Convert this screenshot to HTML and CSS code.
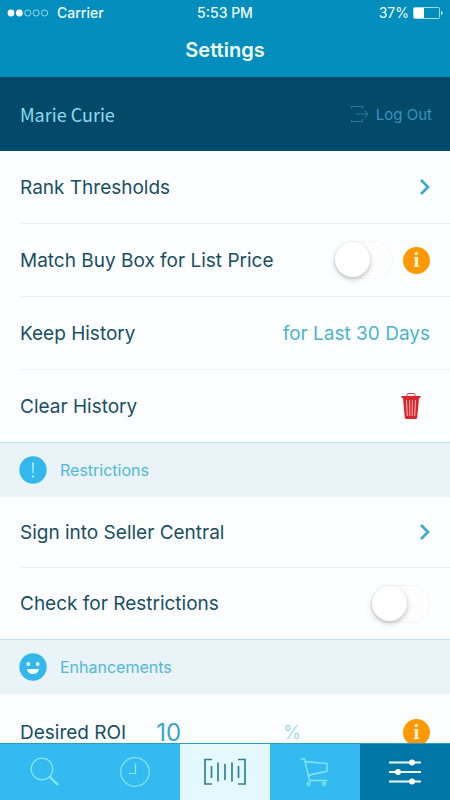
FILE: index.html
```html
<!DOCTYPE html>
<html lang="en">
<head>
<meta charset="utf-8">
<meta name="viewport" content="width=device-width, initial-scale=1">
<title>Settings</title>
<link rel="stylesheet" href="styles.css">
</head>
<body>
<header class="top">
  <div class="status">
    <div class="carrier">
      <svg class="signal" viewBox="0 0 42 8" aria-hidden="true">
        <g fill="#fff"><circle cx="4" cy="4" r="3.4"/><circle cx="12.4" cy="4" r="3.4"/></g>
        <g fill="none" stroke="#b9eafa" stroke-width=".8"><circle cx="20.8" cy="4" r="3.1"/><circle cx="29.2" cy="4" r="3.1"/><circle cx="37.6" cy="4" r="3.1"/></g>
      </svg>
      <span>Carrier</span>
    </div>
    <time>5:53 PM</time>
    <div class="battery">
      <span>37%</span>
      <svg viewBox="0 0 30 12" aria-hidden="true">
        <rect x=".5" y=".5" width="26" height="11" rx="1" fill="none" stroke="#9fdcf2"/>
        <rect x="1" y="1" width="10" height="10" fill="#fff"/>
        <path d="M28 4v4c1-.3 1.5-1 1.500-2s-.5-1.700-1.500-2z" fill="#d5f2fb"/>
      </svg>
    </div>
  </div>
  <h1>Settings</h1>
</header>

<section class="user">
  <span class="user-name">Marie Curie</span>
  <button class="logout" type="button">
    <svg viewBox="0 0 18 16" aria-hidden="true"><path d="M.5 2.500V.5H11.500V3M.5 13.500v2H11.500V13M5 8h12M13.500 4.500 17 8l-3.500 3.500" fill="none" stroke="currentColor"/></svg>
    Log Out
  </button>
</section>

<main class="settings">
  <a class="row" href="#rank">
    <span>Rank Thresholds</span>
    <svg class="chevron" viewBox="0 0 10 18" aria-hidden="true"><path d="M1 2l7 7-7 7"/></svg>
  </a>
  <div class="row">
    <label for="buybox">Match Buy Box for List Price</label>
    <span class="controls">
      <input class="switch" id="buybox" type="checkbox">
      <button class="info" type="button" aria-label="About matching the buy box">i</button>
    </span>
  </div>
  <div class="row">
    <label for="history">Keep History</label>
    <select class="choice" id="history"><option>for Last 30 Days</option></select>
  </div>
  <div class="row">
    <span>Clear History</span>
    <button class="trash" type="button" aria-label="Clear history">
      <svg viewBox="0 0 20 26" aria-hidden="true">
        <path d="M6 3.500V1.500Q6 .5 7 .5h6q1 0 1 1v2" fill="none" stroke="#dd3a3e"/>
        <path d="M.5 3h19v2H.5zM2 5h16l-1.800 19.500Q16 26 14.500 26h-9Q4 26 3.800 24.500z" fill="#dd242b"/>
        <path d="M5.500 7l.8 16M8.600 7l.2 16M11.400 7l-.2 16M14.500 7l-.8 16" stroke="#ffc9c9" stroke-width=".9" fill="none"/>
      </svg>
    </button>
  </div>

  <h2 class="section">
    <svg viewBox="0 0 28 28" aria-hidden="true"><circle cx="14" cy="14" r="13.700" fill="#33b7ec"/><path d="M13.200 6.500h1.600l-.4 11h-.8z" fill="#d5f8ff"/><circle cx="14" cy="20.500" r="1" fill="#d5f8ff"/></svg>
    Restrictions
  </h2>
  <a class="row compact" href="#seller">
    <span>Sign into Seller Central</span>
    <svg class="chevron" viewBox="0 0 10 18" aria-hidden="true"><path d="M1 2l7 7-7 7"/></svg>
  </a>
  <div class="row compact">
    <label for="restrictions">Check for Restrictions</label>
    <input class="switch" id="restrictions" type="checkbox">
  </div>

  <h2 class="section">
    <svg viewBox="0 0 28 28" aria-hidden="true"><circle cx="14" cy="14" r="13.700" fill="#33b7ec"/><g fill="#f2fdff"><circle cx="9.300" cy="11" r="1.900"/><circle cx="18.700" cy="11" r="1.900"/><path d="M8 16h12q-.8 5-6 5t-6-5z"/></g></svg>
    Enhancements
  </h2>
  <div class="row last">
    <label for="roi">Desired ROI</label>
    <input class="amount" id="roi" type="text" inputmode="numeric" value="10">
    <span class="unit">%</span>
    <button class="info" type="button" aria-label="About desired ROI">i</button>
  </div>
</main>

<nav class="tabs">
  <a href="#search" aria-label="Search"><svg viewBox="0 0 32 32" aria-hidden="true"><g fill="none" stroke="#8be7fb"><circle cx="13" cy="13" r="10.800" stroke-width="1.200"/><path d="M20.500 20.500l8.500 8.500" stroke-width="2.200"/></g></svg></a>
  <a href="#recent" aria-label="Recent"><svg viewBox="0 0 32 32" aria-hidden="true"><g fill="none" stroke="#8be7fb" stroke-width="1.200"><circle cx="16" cy="16" r="14.300"/><path d="M16.500 7.500v10H9.500"/></g></svg></a>
  <a class="scan" href="#scan" aria-label="Scan"><svg class="wide" viewBox="0 0 46 32" aria-hidden="true"><path d="M10 3.500H3v24.500H10M36 3.500h7v24.500H36M9.500 10v12M16 6.500v19M23 8v16M30 6.500v19M36.500 10v12" fill="none" stroke="#337f96" stroke-width="1.700"/></svg></a>
  <a href="#cart" aria-label="Cart"><svg viewBox="0 0 32 32" aria-hidden="true"><g fill="none" stroke="#8be7fb" stroke-width="1.300"><path d="M2 3h3.500l5 21.500H28.500M6 5.500l22 2.200v7.500L8.500 19.500"/><circle cx="9.500" cy="28" r="1.500"/><circle cx="25" cy="28" r="1.500"/></g></svg></a>
  <a class="active" href="#settings" aria-label="Settings" aria-current="page"><svg viewBox="0 0 32 32" aria-hidden="true"><path d="M0 6.500h32M0 16h32M0 25.500h32" stroke="#e9fbff" stroke-width="2"/><g fill="#fff"><circle cx="23" cy="6.500" r="3"/><circle cx="9" cy="16" r="3"/><circle cx="23" cy="25.500" r="3"/></g></svg></a>
</nav>
</body>
</html>
```
FILE: styles.css
```css
* { box-sizing: border-box; }

body {
  margin: 0;
  height: 100vh;
  display: flex;
  flex-direction: column;
  overflow: hidden;
  background: #fdfeff;
  color: #174f63;
  font-family: Inter, "Liberation Sans", sans-serif;
  font-size: 19px;
}

a { color: inherit; text-decoration: none; }

button, input, select {
  margin: 0;
  padding: 0;
  border: 0;
  background: none;
  color: inherit;
  font: inherit;
}

svg { display: block; flex: none; }

.top {
  flex: none;
  height: 77px;
  background: #048ebd;
  color: #f0fcff;
}

.status {
  display: grid;
  grid-template-columns: 1fr auto 1fr;
  align-items: center;
  height: 25px;
  padding: 0 7px;
  font-size: 14px;
}

.carrier, .battery { display: flex; align-items: center; }
.carrier { gap: 8px; font-weight: 500; }
.battery { justify-content: flex-end; gap: 4px; }
.status time { font-weight: 500; }
.signal { width: 42px; height: 8px; }
.battery svg { width: 30px; height: 12px; }

h1 {
  margin: 0;
  text-align: center;
  font-size: 20px;
  font-weight: 600;
  line-height: 50px;
}

.user {
  flex: none;
  display: flex;
  align-items: center;
  justify-content: space-between;
  height: 74px;
  padding: 0 18px 0 20px;
  background: #034a69;
}

.user-name {
  color: #8edcf1;
  font-family: "Noto Sans CJK SC", sans-serif;
  font-size: 18px;
  line-height: 24px;
}

.logout {
  display: flex;
  align-items: center;
  gap: 7px;
  color: #3c91bf;
  font-size: 15px;
}

.logout svg { width: 18px; height: 16px; opacity: .7; }

.settings {
  flex: 1;
  min-height: 0;
  overflow: hidden;
}

.row {
  display: flex;
  align-items: center;
  justify-content: space-between;
  height: 73px;
  margin-left: 20px;
  padding-right: 20px;
  border-bottom: 1px solid #e8eff5;
}

.row.compact { height: 71px; }
.row:has(+ .section) { border-bottom: 0; }
.row:not(.compact):has(+ .section) { height: 72px; }

.controls { display: flex; align-items: center; gap: 10px; }

.chevron { width: 10px; height: 18px; }
.chevron path { fill: none; stroke: #3ba9d8; stroke-width: 2.600; }

.switch {
  appearance: none;
  display: flex;
  width: 59px;
  height: 38px;
  border: 1px solid #f4f5f6;
  border-radius: 19px;
  background: #fdfdfe;
}

.switch::before {
  content: "";
  width: 35px;
  height: 35px;
  border-radius: 50%;
  background: #fff;
  box-shadow: 0 2px 4px #0003, 0 3px 10px #0001;
}

.info {
  width: 27px;
  height: 27px;
  border-radius: 50%;
  background: #ff9805;
  color: #fff5dc;
  font-family: "Liberation Serif", serif;
  font-size: 21px;
  font-weight: 700;
  line-height: 27px;
  text-align: center;
}

.choice {
  appearance: none;
  color: #4ab3ce;
  text-align-last: right;
}

.trash { width: 38px; display: flex; justify-content: center; }
.trash svg { width: 20px; height: 26px; }

.section {
  display: flex;
  align-items: center;
  gap: 13px;
  height: 55px;
  margin: 0;
  padding: 0 19px;
  border-top: 1px solid #bfe2e9;
  background: #eaf3f8;
  color: #4fb9da;
  font-size: 16px;
  font-weight: 400;
}

.section svg { width: 28px; height: 28px; }

.row.last { height: 76px; border-bottom: 0; }
.amount { width: 80px; margin-left: 30px; color: #35a6cd; font-size: 24px; }
.unit { flex: 1; margin-left: 47px; color: #94d1e3; font-weight: 300; }

.tabs {
  flex: none;
  display: grid;
  grid-template-columns: repeat(5, 1fr);
  height: 57px;
  border-top: 1px solid #299fc3;
  background: #33baf1;
}

.tabs a { display: flex; align-items: center; justify-content: center; }
.tabs svg { width: 32px; height: 32px; }
.tabs .wide { width: 46px; }
.tabs .scan { background: #e4f8ff; }
.tabs .active { background: #0077a7; }
```
